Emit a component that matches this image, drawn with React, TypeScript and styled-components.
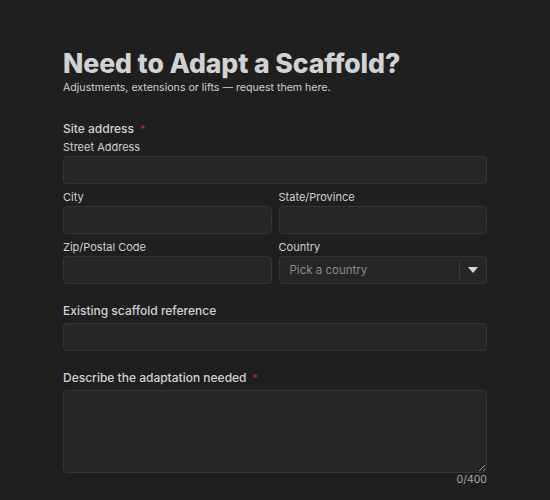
import styled, { createGlobalStyle } from "styled-components";

const GlobalStyle = createGlobalStyle`
  html, body {
    margin: 0;
    padding: 0;
    background: #1f1f1f;
  }
  body {
    font-family: Inter, "Noto Sans", sans-serif;
    color: #d4d4d4;
  }
  * {
    box-sizing: border-box;
  }
`;

const Page = styled.div`
  width: 550px;
  min-height: 500px;
  background: #1f1f1f;
  padding: 46px 63px 0 63px;
`;

const Title = styled.h1`
  margin: 0;
  font-size: 26.6px;
  line-height: 34px;
  font-weight: 800;
  color: #d2d2d2;
  letter-spacing: -0.1px;
`;

const Subtitle = styled.p`
  margin: 1px 0 0 0;
  font-size: 10.6px;
  line-height: 14px;
  color: #d0d0d0;
`;

const Form = styled.form`
  display: flex;
  flex-direction: column;
  margin-top: 26px;
`;

const Section = styled.fieldset<{ $gap?: number }>`
  border: 0;
  margin: 0 0 ${({ $gap }) => $gap ?? 19}px 0;
  padding: 0;
  display: flex;
  flex-direction: column;
`;

const SectionLabel = styled.label<{ $space?: number }>`
  display: flex;
  align-items: center;
  gap: 6px;
  font-size: 12px;
  line-height: 16px;
  font-weight: 500;
  color: #d2d2d2;
  margin-bottom: ${({ $space }) => $space ?? 4}px;
`;

const Required = styled.span`
  color: #c8195a;
  font-size: 10px;
  line-height: 10px;
`;

const Grid = styled.div`
  display: grid;
  grid-template-columns: 1fr 1fr;
  column-gap: 7px;
  row-gap: 6px;
`;

const Field = styled.div<{ $span?: boolean }>`
  display: flex;
  flex-direction: column;
  grid-column: ${({ $span }) => ($span ? "1 / -1" : "auto")};
`;

const SubLabel = styled.label`
  font-size: 11px;
  line-height: 14px;
  color: #d0d0d0;
  margin-bottom: 2px;
`;

const Input = styled.input`
  height: 28px;
  width: 100%;
  background: #262626;
  border: 1px solid #343434;
  border-radius: 4px;
  padding: 0 10px;
  color: #d0d0d0;
  font-family: inherit;
  font-size: 12px;
  outline: none;
`;

const Select = styled.div`
  height: 28px;
  display: flex;
  align-items: center;
  background: #262626;
  border: 1px solid #343434;
  border-radius: 4px;
`;

const Placeholder = styled.span`
  flex: 1;
  padding: 0 10px;
  font-size: 11.5px;
  color: #8a8a8a;
`;

const Divider = styled.span`
  width: 1px;
  height: 18px;
  background: #3a3a3a;
`;

const Caret = styled.span`
  width: 26px;
  display: flex;
  justify-content: center;
  align-items: center;
`;

const TextArea = styled.textarea`
  height: 83px;
  width: 100%;
  background: #262626;
  border: 1px solid #343434;
  border-radius: 4px;
  padding: 8px 10px;
  color: #d0d0d0;
  font-family: inherit;
  font-size: 12px;
  outline: none;
  resize: vertical;
  display: block;
`;

const Counter = styled.div`
  text-align: right;
  font-size: 10.5px;
  line-height: 14px;
  color: #a8a8a8;
`;

export default function App() {
  return (
    <>
      <GlobalStyle />
      <Page>
        <Title>Need to Adapt a Scaffold?</Title>
        <Subtitle>Adjustments, extensions or lifts — request them here.</Subtitle>
        <Form>
          <Section>
            <SectionLabel $space={3}>
              Site address <Required>*</Required>
            </SectionLabel>
            <Grid>
              <Field $span>
                <SubLabel>Street Address</SubLabel>
                <Input />
              </Field>
              <Field>
                <SubLabel>City</SubLabel>
                <Input />
              </Field>
              <Field>
                <SubLabel>State/Province</SubLabel>
                <Input />
              </Field>
              <Field>
                <SubLabel>Zip/Postal Code</SubLabel>
                <Input />
              </Field>
              <Field>
                <SubLabel>Country</SubLabel>
                <Select>
                  <Placeholder>Pick a country</Placeholder>
                  <Divider />
                  <Caret>
                    <svg width="10" height="6" viewBox="0 0 10 6">
                      <path d="M0 0h10L5 6z" fill="#d8d8d8" />
                    </svg>
                  </Caret>
                </Select>
              </Field>
            </Grid>
          </Section>
          <Section>
            <SectionLabel>Existing scaffold reference</SectionLabel>
            <Input />
          </Section>
          <Section $gap={0}>
            <SectionLabel>
              Describe the adaptation needed <Required>*</Required>
            </SectionLabel>
            <TextArea />
            <Counter>0/400</Counter>
          </Section>
        </Form>
      </Page>
    </>
  );
}
